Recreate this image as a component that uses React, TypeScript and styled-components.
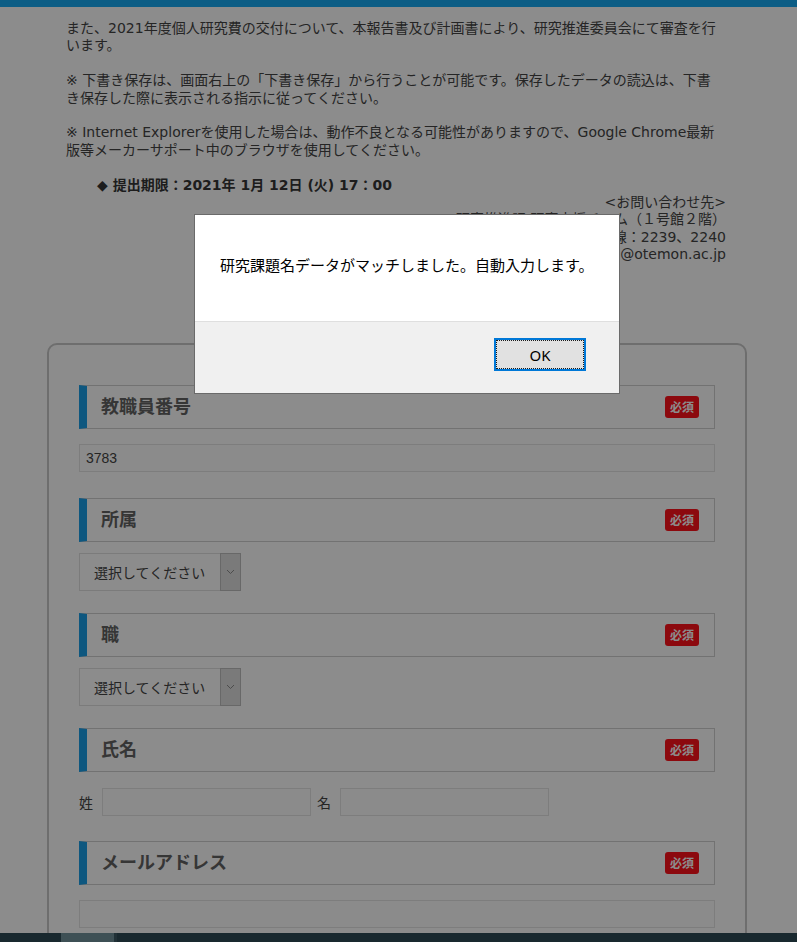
import styled, { createGlobalStyle } from "styled-components";

const GlobalStyle = createGlobalStyle`
  html, body {
    margin: 0;
    padding: 0;
  }

  body {
    background: #fff;
    color: #444;
    font-family: "DejaVu Sans", "Noto Sans CJK JP", sans-serif;
    font-size: 14px;
  }

  * {
    box-sizing: border-box;
  }
`;

const fields = [
  { label: "教職員番号", kind: "text", value: "3783" },
  { label: "所属", kind: "select" },
  { label: "職", kind: "select" },
  { label: "氏名", kind: "name" },
  { label: "メールアドレス", kind: "text", value: "" },
];

export default function App() {
  return (
    <>
      <GlobalStyle />
      <TopBar />
      <Container>
        <Notice>
          <Para>
            また、2021年度個人研究費の交付について、本報告書及び計画書により、研究推進委員会にて審査を行います。
          </Para>
          <Para>
            ※ 下書き保存は、画面右上の「下書き保存」から行うことが可能です。保存したデータの読込は、下書き保存した際に表示される指示に従ってください。
          </Para>
          <Para>
            ※ Internet Explorerを使用した場合は、動作不良となる可能性がありますので、Google Chrome最新版等メーカーサポート中のブラウザを使用してください。
          </Para>
          <Deadline>◆ 提出期限：2021年 1月 12日 (火) 17：00</Deadline>
          <Contact>
            <div>&lt;お問い合わせ先&gt;</div>
            <div>研究推進課 研究支援チーム（１号館２階）</div>
            <div>TEL：内線：2239、2240</div>
            <div>E-mail：kenkyu@otemon.ac.jp</div>
          </Contact>
        </Notice>

        <FormCard>
          {fields.map((f) => (
            <Field key={f.label}>
              <FieldHeading>
                <HeadingLabel>{f.label}</HeadingLabel>
                <Required>必須</Required>
              </FieldHeading>
              {f.kind === "text" && (
                <TextInput type="text" defaultValue={f.value} />
              )}
              {f.kind === "select" && (
                <SelectBox>
                  <SelectText>選択してください</SelectText>
                  <SelectArrow>
                    <svg width="9" height="6" viewBox="0 0 9 6">
                      <polyline
                        points="1,1 4.5,4.5 8,1"
                        fill="none"
                        stroke="#8a8a8a"
                        strokeWidth="1"
                      />
                    </svg>
                  </SelectArrow>
                </SelectBox>
              )}
              {f.kind === "name" && (
                <NameRow>
                  <NameLabel>姓</NameLabel>
                  <NameInput type="text" />
                  <NameLabel>名</NameLabel>
                  <NameInput type="text" />
                </NameRow>
              )}
            </Field>
          ))}
        </FormCard>
      </Container>

      <FooterBar>
        <FooterTab />
      </FooterBar>

      <Backdrop />
      <Dialog role="alertdialog">
        <DialogBody>研究課題名データがマッチしました。自動入力します。</DialogBody>
        <DialogFooter>
          <OkButton type="button">OK</OkButton>
        </DialogFooter>
      </Dialog>
    </>
  );
}

const TopBar = styled.div`
  height: 7px;
  background: #17aaf2;
`;

const Container = styled.div`
  width: 700px;
  margin: 0 auto 0 47px;
`;

const Notice = styled.div`
  padding: 13px 24px 0 19px;
  line-height: 17.4px;
`;

const Para = styled.p`
  margin: 0 0 17.4px;
`;

const Deadline = styled.div`
  padding-left: 31px;
  font-weight: 700;
  color: #363636;
`;

const Contact = styled.div`
  text-align: right;
  margin-right: -3px;
`;

const FormCard = styled.div`
  margin-top: 79px;
  padding: 40px 30px 60px;
  border: 2px solid #c8c8c8;
  border-radius: 10px;
`;

const Field = styled.div`
  display: flex;
  flex-direction: column;
  align-items: flex-start;
  margin-bottom: 22px;
`;

const FieldHeading = styled.div`
  display: flex;
  align-items: center;
  justify-content: space-between;
  align-self: stretch;
  height: 44px;
  margin-bottom: 11px;
  padding: 0 15px 0 14px;
  border: 1px solid #cfcfcf;
  border-left: 8px solid #1a9fe8;
`;

const HeadingLabel = styled.span`
  margin-bottom: 3px;
  font-family: "Noto Sans CJK JP", sans-serif;
  font-size: 18px;
  font-weight: 700;
  color: #636363;
`;

const Required = styled.span`
  display: inline-flex;
  align-items: center;
  justify-content: center;
  width: 34px;
  height: 22px;
  border-radius: 3px;
  background: #ff121a;
  color: #fff;
  font-family: "Noto Sans CJK JP", sans-serif;
  font-size: 12px;
  font-weight: 700;
`;

const TextInput = styled.input`
  align-self: stretch;
  height: 28px;
  margin: 4px 0;
  padding: 0 6px;
  border: 1px solid #e3e3e3;
  background: #fdfdfd;
  font-family: "Liberation Sans", Arial, sans-serif;
  font-size: 14px;
  color: #444;
  outline: none;
`;

const SelectBox = styled.div`
  display: flex;
  width: 162px;
  height: 38px;
`;

const SelectText = styled.span`
  flex: 1;
  display: flex;
  align-items: center;
  padding-left: 14px;
  border: 1px solid #e0e0e0;
  border-right: none;
  font-family: "Noto Sans CJK JP", sans-serif;
  font-size: 14px;
  color: #444;
`;

const SelectArrow = styled.span`
  display: flex;
  align-items: center;
  justify-content: center;
  width: 21px;
  border: 1px solid #bdbdbd;
  background: #dedede;
`;

const NameRow = styled.div`
  display: flex;
  align-items: center;
  margin: 5px 0 3px;
`;

const NameLabel = styled.span`
  width: 23px;
  margin-left: 6px;
  font-family: "Noto Sans CJK JP", sans-serif;
  font-size: 14px;

  &:first-child {
    margin-left: 0;
  }
`;

const NameInput = styled.input`
  width: 209px;
  height: 28px;
  padding: 0 6px;
  border: 1px solid #e3e3e3;
  background: #fdfdfd;
  outline: none;
`;

const FooterBar = styled.div`
  position: fixed;
  left: 0;
  right: 0;
  bottom: 0;
  height: 9px;
  display: flex;
  padding-left: 61px;
  background: #2f4c57;
`;

const FooterTab = styled.div`
  width: 56px;
  background: #71929b;
  border-right: 3px solid #3c5964;
`;

const Backdrop = styled.div`
  position: fixed;
  inset: 0;
  background: rgba(0, 0, 0, 0.45);
`;

const Dialog = styled.div`
  position: fixed;
  top: 214px;
  left: 194px;
  width: 426px;
  border: 1px solid #6a6a6a;
  background: #fff;
`;

const DialogBody = styled.div`
  display: flex;
  align-items: center;
  height: 106px;
  padding: 0 0 7px 25px;
  font-family: "Noto Sans CJK JP", sans-serif;
  font-size: 15px;
  color: #000;
`;

const DialogFooter = styled.div`
  display: flex;
  justify-content: flex-end;
  align-items: flex-start;
  height: 72px;
  padding: 16px 33px 0 0;
  border-top: 1px solid #dfdfdf;
  background: #f0f0f0;
`;

const OkButton = styled.button`
  position: relative;
  width: 92px;
  height: 33px;
  padding: 0;
  border: 2px solid #0078d7;
  background: #e1e1e1;
  font-family: "Noto Sans", "Open Sans", sans-serif;
  font-size: 15px;
  color: #000;

  &::after {
    content: "";
    position: absolute;
    inset: 0;
    border: 1px dotted #1b1b1b;
  }
`;
